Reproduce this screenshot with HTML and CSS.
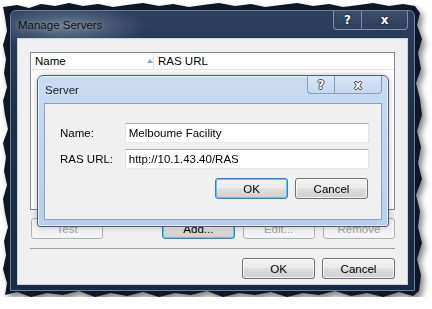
FILE: index.html
```html
<!DOCTYPE html>
<html lang="en">
<head>
    <meta charset="UTF-8">
    <title>Manage Servers</title>
    <link rel="stylesheet" href="styles.css">
</head>
<body>
    <div class="shadow">
        <div class="torn">
            <div class="window">
                <div class="titlebar">
                    <span class="title">Manage Servers</span>
                    <div class="caption">
                        <span class="cap help">?</span>
                        <span class="cap close">x</span>
                    </div>
                </div>

                <div class="client">
                    <!-- server list -->
                    <div class="list">
                        <div class="list-head">
                            <div class="col col-name">Name <span class="sort"></span></div>
                            <div class="col col-url">RAS URL</div>
                        </div>
                    </div>

                    <div class="btn-row">
                        <button class="btn disabled btn-test">Test</button>
                        <button class="btn default btn-add">Add...</button>
                        <button class="btn disabled">Edit...</button>
                        <button class="btn disabled">Remove</button>
                    </div>

                    <div class="sep"></div>

                    <div class="btn-row end">
                        <button class="btn">OK</button>
                        <button class="btn">Cancel</button>
                    </div>

                    <!-- modal Server dialog -->
                    <div class="dialog">
                        <div class="dlg-titlebar">
                            <span class="dlg-title">Server</span>
                            <div class="dlg-caption">
                                <span class="dcap dhelp">?</span>
                                <span class="dcap dclose">x</span>
                            </div>
                        </div>
                        <div class="dlg-client">
                            <div class="field">
                                <label for="name">Name:</label>
                                <input type="text" id="name" value="Melboume Facility">
                            </div>
                            <div class="field">
                                <label for="url">RAS URL:</label>
                                <input type="text" id="url" value="http://10.1.43.40/RAS">
                            </div>
                            <div class="btn-row end dlg-buttons">
                                <button class="btn default">OK</button>
                                <button class="btn">Cancel</button>
                            </div>
                        </div>
                    </div>
                </div>
            </div>
        </div>
    </div>
</body>
</html>
```

FILE: styles.css
```css
* {
    box-sizing: border-box;
}
body {
    margin: 0;
    background: #fff;
    font-family: "Liberation Sans", Arial, sans-serif;
    font-size: 11.5px;
    color: #000;
}
/* torn paper edge round the screenshot */
.shadow {
    margin: 3px 0 0 3px;
    width: 419px;
    height: 294px;
    filter: drop-shadow(3px 4px 3px rgba(0, 0, 0, 0.5));
}
.torn {
    width: 419px;
    height: 294px;
    padding: 7px 0 0 7px;
    background: #0c1828;
    clip-path: polygon(
        0 4px, 14px 2px, 26px 5px, 38px 1px, 52px 3px, 66px 0, 80px 3px, 95px 1px, 110px 4px, 124px 2px,
        140px 0, 156px 3px, 170px 1px, 186px 4px, 200px 2px, 216px 0, 232px 3px, 248px 1px, 262px 4px,
        278px 2px, 294px 0, 310px 3px, 326px 1px, 340px 4px, 356px 2px, 370px 0, 386px 3px, 400px 1px,
        412px 3px, 417px 10px, 414px 22px, 419px 36px, 415px 50px, 418px 66px, 413px 80px, 417px 96px,
        419px 112px, 414px 128px, 418px 144px, 415px 160px, 419px 176px, 413px 192px, 417px 208px,
        415px 224px, 419px 240px, 414px 256px, 418px 272px, 416px 288px, 410px 293px, 396px 289px,
        380px 294px, 364px 290px, 348px 293px, 332px 288px, 316px 292px, 300px 290px, 284px 294px,
        268px 289px, 252px 292px, 236px 290px, 220px 294px, 204px 288px, 188px 292px, 172px 290px,
        156px 294px, 140px 289px, 124px 293px, 108px 290px, 92px 294px, 76px 288px, 60px 292px,
        44px 290px, 28px 294px, 14px 289px, 2px 292px, 4px 280px, 0 266px, 3px 252px, 1px 238px,
        5px 224px, 2px 210px, 0 196px, 4px 182px, 1px 168px, 3px 154px, 0 140px, 5px 126px, 2px 112px,
        0 98px, 4px 84px, 1px 70px, 3px 56px, 0 42px, 4px 28px, 2px 14px
    );
}
.window {
    width: 405px;
    height: 281px;
    padding: 0 6px 6px 6px;
    border: 1px solid #6f8096;
    border-radius: 6px 6px 0 0;
    background: radial-gradient(ellipse 80px 22px at 55px 15px, #6b7b90 0%, rgba(60, 76, 100, 0) 100%),
                linear-gradient(180deg, #2c3f5c 0%, #1f3048 40%, #1a2a42 100%);
}
.titlebar {
    height: 27px;
    display: flex;
    justify-content: space-between;
    align-items: flex-start;
}
.title {
    margin: 8px 0 0 1px;
    color: #101010;
    text-shadow: 0 0 5px rgba(200, 210, 222, 0.6);
}
.caption {
    display: flex;
}
.cap {
    height: 19px;
    display: flex;
    align-items: center;
    justify-content: center;
    border: 1px solid rgba(190, 205, 225, 0.55);
    border-top: none;
    color: #fff;
    font-family: "DejaVu Sans", sans-serif;
    font-weight: bold;
    font-size: 12px;
    text-shadow: 0 0 2px #000;
    background: linear-gradient(180deg, rgba(255, 255, 255, 0.08), rgba(255, 255, 255, 0.02));
}
.help {
    width: 29px;
    border-radius: 0 0 0 4px;
}
.close {
    width: 46px;
    border-left: none;
    border-radius: 0 0 4px 0;
}
.client {
    position: relative;
    height: 247px;
    padding: 13px 12px 0 12px;
    border: 1px solid #c9d4e0;
    background: #f0f0f0;
}
.list {
    height: 158px;
    border: 1px solid #828790;
    background: #fff;
}
.list-head {
    display: flex;
    height: 17px;
    border-bottom: 1px solid #e5e5e5;
}
.col {
    display: flex;
    align-items: center;
    padding-left: 4px;
}
.col-name {
    width: 123px;
    border-right: 1px solid #e5e5e5;
}
.sort {
    margin-left: 81px;
    width: 0;
    height: 0;
    border-left: 3px solid transparent;
    border-right: 3px solid transparent;
    border-bottom: 4px solid #8fa3bd;
}
.btn-row {
    display: flex;
    margin-top: 8px;
}
.btn-row.end {
    justify-content: flex-end;
    gap: 7px;
    margin-top: 9px;
}
.btn {
    width: 73px;
    height: 21px;
    padding: 0;
    font-family: inherit;
    font-size: 11.5px;
    color: #000;
    border: 1px solid #707070;
    border-radius: 3px;
    background: linear-gradient(180deg, #f2f2f2 0%, #ebebeb 48%, #dddddd 52%, #cfcfcf 100%);
    box-shadow: inset 0 0 0 1px rgba(255, 255, 255, 0.7);
}
.btn.default {
    border-color: #3c7fb1;
    box-shadow: inset 0 0 0 1px #48d1f8;
}
.btn.disabled {
    color: #a0a0a0;
    border-color: #adb2b5;
    background: #f4f4f4;
    box-shadow: none;
}
.btn-test {
    margin-left: 1px;
}
.btn-add {
    margin-left: 59px;
}
.btn-row .btn + .btn.disabled {
    margin-left: 8px;
}
.sep {
    margin-top: 9px;
    height: 1px;
    background: #a0a0a0;
}
.dialog {
    position: absolute;
    left: 19px;
    top: 36px;
    width: 352px;
    height: 152px;
    padding: 0 6px 7px 6px;
    border: 1px solid #4b5d74;
    border-radius: 6px 6px 3px 3px;
    background: linear-gradient(180deg, #c9dcf2 0%, #bfd4ee 50%, #b9cfe9 100%);
    box-shadow: inset 0 0 0 1px rgba(255, 255, 255, 0.6), 0 0 6px rgba(0, 0, 0, 0.25);
}
.dlg-titlebar {
    height: 27px;
    display: flex;
    justify-content: space-between;
    align-items: flex-start;
}
.dlg-title {
    margin: 8px 0 0 1px;
    color: #1a1a1a;
}
.dlg-caption {
    display: flex;
}
.dcap {
    height: 18px;
    display: flex;
    align-items: center;
    justify-content: center;
    border: 1px solid #8c9db3;
    border-top: none;
    color: #fff;
    font-family: "DejaVu Sans", sans-serif;
    font-weight: bold;
    font-size: 12px;
    text-shadow: 1px 0 0 #4a4a4a, -1px 0 0 #4a4a4a, 0 1px 0 #4a4a4a, 0 -1px 0 #4a4a4a;
    background: linear-gradient(180deg, #dae7f6, #c4d7ee);
}
.dhelp {
    width: 28px;
    border-radius: 0 0 0 4px;
}
.dclose {
    width: 47px;
    border-left: none;
    border-radius: 0 0 4px 0;
}
.dlg-client {
    height: 117px;
    padding: 19px 12px 0 15px;
    border: 1px solid #8ea2bb;
    background: #f0f0f0;
}
.field {
    display: flex;
    align-items: center;
    margin-bottom: 6px;
}
.field label {
    width: 65px;
}
.field input {
    width: 245px;
    height: 20px;
    padding: 0 3px;
    font-family: inherit;
    font-size: 11.5px;
    color: #000;
    background: #fff;
    border: 1px solid #e2e3ea;
    border-top-color: #abadb3;
    border-bottom-color: #e3e9ef;
    outline: none;
}
.dlg-buttons {
    margin-top: 12px;
    margin-right: 1px;
    gap: 8px;
}
```
